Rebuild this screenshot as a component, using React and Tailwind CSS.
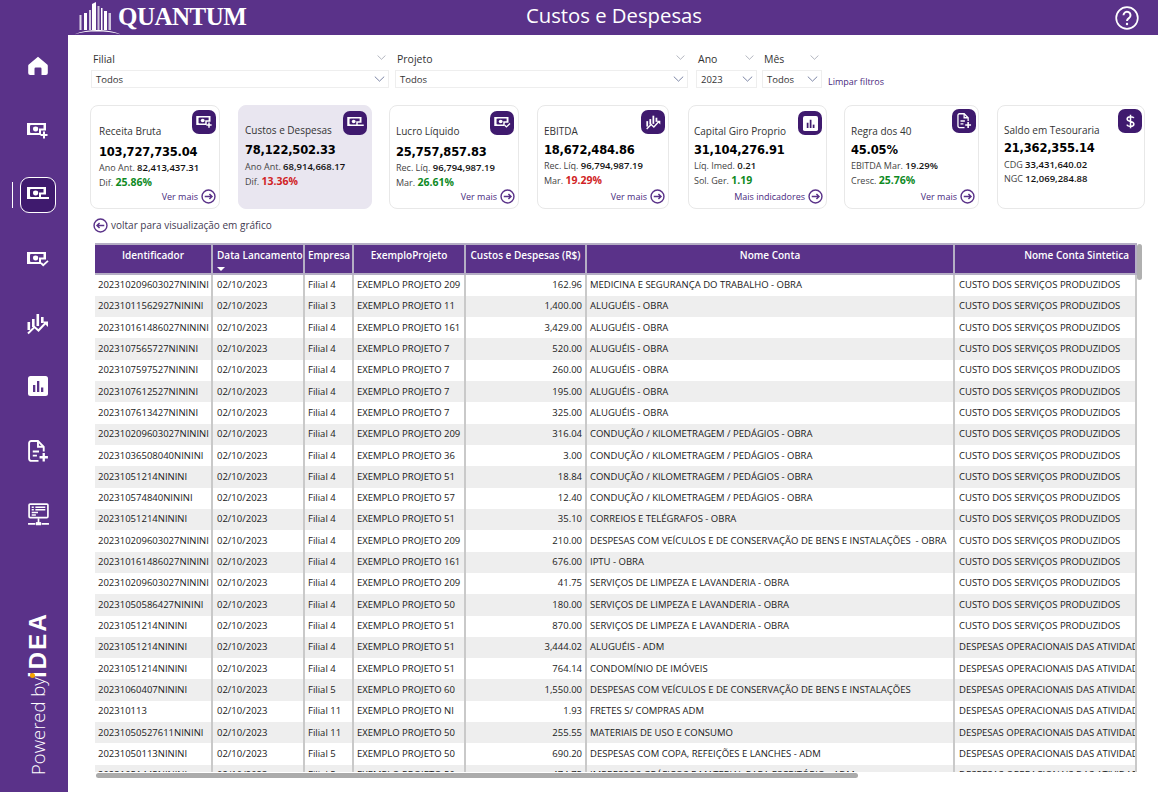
import React from "react";

const FONT = "[font-family:'Open_Sans','Noto_Sans',sans-serif]";

// icons
const Home = ({ className }) => (
  <svg viewBox="0 0 20 20" className={className} fill="currentColor">
    <path d="M10 .8 19.2 8.6c.4.4.6.8.6 1.3V17a2 2 0 0 1-2 2h-4.3v-6.2a1.2 1.2 0 0 0-1.2-1.2H7.7a1.2 1.2 0 0 0-1.2 1.2V19H2.2a2 2 0 0 1-2-2V9.900c0-.5.2-.9.6-1.300Z" />
  </svg>
);

const Money = ({ type, className, bg = "#5a3289" }) => (
  <svg viewBox="0 0 22 16" className={className} fill="none">
    <path fillRule="evenodd" fill="currentColor" d="M0 0h19v7.500h-5V12H0Z" />
    <path fill={bg} d="M3 2h13.500v3.500H12V10H3Z" />
    <path fill="currentColor" d="M2.500 1.500h3.500a4.500 4.500 0 0 0 0 9H2.500Z" />
    <ellipse cx="8.600" cy="6" rx="2.600" ry="2.400" fill="currentColor" />
    {type === "plus" && <path d="M17 8.500v7M13.500 12h7" stroke="currentColor" strokeWidth="2" />}
    {type === "minus" && <path d="M13 11h9" stroke="currentColor" strokeWidth="2" />}
    {type === "check" && <path d="m14 11 2.200 2.200L21 8.800" stroke="currentColor" strokeWidth="1.800" />}
  </svg>
);

const Trend = ({ className }) => (
  <svg viewBox="0 0 22 22" className={className} fill="currentColor">
    <rect x="5" y="6" width="2.600" height="8" />
    <rect x="9.500" y="1" width="2.600" height="12" />
    <rect x="14" y="4" width="2.600" height="6" />
    <rect x="0.500" y="9" width="2.600" height="8" />
    <path d="M1 20.500 7.500 14l4 3.500L18.500 10" fill="none" stroke="currentColor" strokeWidth="2" />
    <path d="M15.500 8.500H21V14Z" />
  </svg>
);

const Bars = ({ className, bg = "#5a3289" }) => (
  <svg viewBox="0 0 20 20" className={className}>
    <rect width="20" height="20" rx="2.500" fill="currentColor" />
    <rect x="5" y="9" width="2.300" height="7" fill={bg} />
    <rect x="9" y="5" width="2.300" height="11" fill={bg} />
    <rect x="13" y="11.500" width="2.300" height="4.500" fill={bg} />
  </svg>
);

const DocPlus = ({ className }) => (
  <svg viewBox="0 0 20 22" className={className} fill="none" stroke="currentColor" strokeWidth="1.800">
    <path d="M10 20H3a2 2 0 0 1-2-2V3a2 2 0 0 1 2-2h6.500L15 6.500V11" />
    <path d="M9.500 1v5.500H15" />
    <path d="M4.500 11h6M4.500 15h4" />
    <path d="M15 12.500v8M11 16.500h8" strokeWidth="2.200" />
  </svg>
);

const Monitor = ({ className }) => (
  <svg viewBox="0 0 20 22" className={className} fill="none" stroke="currentColor">
    <rect x="1" y="1" width="18" height="13" rx="1" strokeWidth="1.600" />
    <path d="M3.500 4h2M7 4h9.500M3.500 6.500h2M7 6.500h9.500M3.500 9h6M3.500 11.500h4" strokeWidth="1.400" />
    <path d="M10 14.500v5M0 20h7M13 20h7" strokeWidth="1.600" />
    <rect x="7.500" y="18.300" width="5" height="3" fill="currentColor" stroke="none" />
  </svg>
);

const Dollar = ({ className }) => (
  <svg viewBox="0 0 12 20" className={className} fill="none" stroke="currentColor" strokeWidth="2">
    <path d="M6 1v18M10.500 5.500C10 4 8 3.500 6 3.500 3.500 3.500 1.500 4.700 1.500 6.700 1.500 11 10.500 8.800 10.500 13.300c0 2-2 3.200-4.500 3.200-2.300 0-4.200-.7-4.700-2.300" />
  </svg>
);

const Chevron = ({ className }) => (
  <svg viewBox="0 0 12 7" className={className} fill="none" stroke="currentColor" strokeWidth="0.900">
    <path d="M.5.700 6 6 11.500.7" />
  </svg>
);

const CircleArrow = ({ left }) => (
  <svg viewBox="0 0 16 16" className="w-[15px] h-[15px] text-[#5a3289]" fill="none" stroke="currentColor">
    <circle cx="8" cy="8" r="6.900" strokeWidth="1.500" />
    {left ? (
      <path d="M12 8H4.500M7 5.300 4.300 8 7 10.700" strokeWidth="1.600" />
    ) : (
      <path d="M4 8h7.500M9 5.300 11.700 8 9 10.700" strokeWidth="1.600" />
    )}
  </svg>
);

const Logo = () => (
  <div className="flex items-end">
    <svg viewBox="0 0 48 34" className="w-[48px] h-[34px] text-white">
      <path d="M0 33.500C8 30 16 29 23 29s16 1 24 4.500c-8-2.500-16-3-24-3s-16 .5-23 3Z" fill="currentColor" />
      <g fill="currentColor">
        <rect x="10" y="12" width="3" height="17" />
        <rect x="15" y="9" width="2" height="20" opacity=".75" />
        <path d="M18 3 22 1v28h-4Z" />
        <rect x="23.500" y="5" width="2" height="24" opacity=".7" />
        <rect x="27" y="7" width="1.500" height="22" />
        <path d="M30 10h3v19h-3Z" />
        <rect x="34.500" y="12" width="2.500" height="17" opacity=".7" />
        <rect x="5.500" y="14" width="2" height="15" opacity=".8" />
      </g>
    </svg>
    <span className="-ml-[4px] mb-[6px] font-['Liberation_Serif',serif] font-bold text-[25px] leading-none tracking-[-0.5px] text-white">QUANTUM</span>
  </div>
);

const navItems = [
  { key: "home", mt: "mt-[21px]", el: <Home className="w-[20px] h-[20px]" /> },
  { key: "plus", mt: "mt-[47px]", el: <Money type="plus" className="w-[22px] h-[16px]" /> },
  { key: "check", mt: "mt-[39px]", el: <Money type="check" className="w-[22px] h-[16px]" /> },
  { key: "trend", mt: "mt-[45px]", el: <Trend className="w-[22px] h-[22px]" /> },
  { key: "bars", mt: "mt-[41px]", el: <Bars className="w-[20px] h-[20px]" /> },
  { key: "doc", mt: "mt-[44px]", el: <DocPlus className="w-[21px] h-[23px]" /> },
  { key: "mon", mt: "mt-[40px]", el: <Monitor className="w-[21px] h-[23px]" /> },
];

const Sidebar = () => (
  <aside className="w-[68px] h-full shrink-0 bg-[#5a3289] pl-[8px] flex flex-col items-center text-white relative">
    <div className="h-[35px] shrink-0" />
    <div className={`flex justify-center ${navItems[0].mt}`}>{navItems[0].el}</div>
    <div className={`flex justify-center ${navItems[1].mt}`}>{navItems[1].el}</div>
    <div className="mt-[38px] relative">
      <div className="absolute -left-[8px] top-[5px] w-[1px] h-[26px] bg-white" />
      <div className="w-[36px] h-[36px] rounded-[9px] border border-white bg-[#3f1a6e] flex items-center justify-center">
        <Money type="minus" className="w-[22px] h-[16px]" bg="#3f1a6e" />
      </div>
    </div>
    {navItems.slice(2).map((n) => (
      <div key={n.key} className={`flex justify-center ${n.mt}`}>{n.el}</div>
    ))}
    <div className="mt-auto mb-[17px] flex items-center rotate-180 [writing-mode:vertical-rl]">
      <span className="text-[18.500px] leading-[22px] text-white font-['Open_Sans',sans-serif] font-light">Powered by</span>
      <span className="relative -mt-[1px] text-[24px] leading-[22px] font-['Liberation_Sans',sans-serif] font-bold tracking-[2.200px]">
        iDEA
        <span className="absolute right-[3px] top-[0px] w-[5px] h-[5px] rounded-full bg-[#f5a400]" />
      </span>
    </div>
  </aside>
);

const Filter = ({ label, value, className, gap = "pr-[2px]" }) => (
  <div className={`flex flex-col shrink-0 ${className}`}>
    <div className={`h-[20px] flex items-center justify-between pl-[2px] ${gap} text-[10.500px] text-[#333]`}>
      <span>{label}</span>
      <Chevron className="w-[9px] h-[5px] text-[#8a8f9c] mt-[-6px] mr-[1px]" />
    </div>
    <div className="h-[18px] border border-[#eeeeee] flex items-center justify-between pl-[4px] pr-[3px] text-[9.500px] text-[#333]">
      <span className="pt-[2px]">{value}</span>
      <Chevron className="w-[11px] h-[6px] text-[#55608a]" />
    </div>
  </div>
);

const Filters = () => (
  <div className="flex pl-[23px] pt-[15px] h-[70px]">
    <Filter label="Filial" value="Todos" className="w-[298px]" />
    <Filter label="Projeto" value="Todos" className="w-[293px] ml-[6px]" />
    <Filter label="Ano" value="2023" className="w-[61px] ml-[8px]" />
    <Filter label="Mês" value="Todos" className="w-[60px] ml-[5px]" />
    <span className="ml-[6px] mt-[26px] text-[9px] leading-[12px] text-[#4a2a80]">Limpar filtros</span>
  </div>
);

const Sub = ({ label, value, color }) => (
  <div className="text-[9px] leading-[14px] h-[14px] whitespace-nowrap text-[#444]">
    {label}{" "}
    {color ? (
      <span className={`font-bold text-[10.500px] ${color}`}>{value}</span>
    ) : (
      <span className="font-semibold text-[9.500px] text-[#111]">{value}</span>
    )}
  </div>
);

const GREEN = "text-[#0f8a1f]";
const RED = "text-[#d11f26]";

const cards = [
  { title: "Receita Bruta", value: "103,727,735.04", rows: [["Ano Ant.", "82,413,437.31"], ["Dif.", "25.86%", GREEN]], more: "Ver mais", icon: <Money type="plus" className="w-[17px] h-[12px]" bg="#3f1a6e" />, box: "w-[130px] ml-[22px] pl-[8px] pt-[18px]", vm: "mt-[6px]", rm: "mt-[1px]", tile: "right-[3px] top-[4px]" },
  { title: "Custos e Despesas", value: "78,122,502.33", rows: [["Ano Ant.", "68,914,668.17"], ["Dif.", "13.36%", RED]], icon: <Money type="minus" className="w-[17px] h-[12px]" bg="#3f1a6e" />, box: "w-[134px] ml-[18px] pl-[6px] pt-[17px] bg-[#e9e6f0] border-[#e9e6f0]", vm: "mt-[5px]", rm: "mt-[2px]", tile: "right-[4px] top-[5px]" },
  { title: "Lucro Líquido", value: "25,757,857.83", rows: [["Rec. Líq.", "96,794,987.19"], ["Mar.", "26.61%", GREEN]], more: "Ver mais", icon: <Money type="check" className="w-[17px] h-[12px]" bg="#3f1a6e" />, box: "w-[130px] ml-[17px] pl-[6px] pt-[18px]", vm: "mt-[6px]", rm: "mt-[1px]", tile: "right-[4px] top-[5px]" },
  { title: "EBITDA", value: "18,672,484.86", rows: [["Rec. Líq.", "96,794,987.19"], ["Mar.", "19.29%", RED]], more: "Ver mais", icon: <Trend className="w-[15px] h-[15px]" />, box: "w-[132px] ml-[18px] pl-[6px] pt-[18px]", vm: "mt-[4px]", rm: "mt-[1px]", tile: "right-[3px] top-[4px]" },
  { title: "Capital Giro Proprio", value: "31,104,276.91", rows: [["Líq. Imed.", "0.21"], ["Sol. Ger.", "1.19", GREEN]], more: "Mais indicadores", icon: <Bars className="w-[15px] h-[15px]" bg="#3f1a6e" />, box: "w-[139px] ml-[19px] pl-[5px] pt-[18px]", vm: "mt-[4px]", rm: "mt-[1px]", tile: "right-[4px] top-[5px]" },
  { title: "Regra dos 40", value: "45.05%", rows: [["EBITDA Mar.", "19.29%"], ["Cresc.", "25.76%", GREEN]], more: "Ver mais", icon: <DocPlus className="w-[15px] h-[16px]" />, box: "w-[135px] ml-[17px] pl-[6px] pt-[18px]", vm: "mt-[4px]", rm: "mt-[1px]", tile: "right-[2px] top-[3px]" },
  { title: "Saldo em Tesouraria", value: "21,362,355.14", rows: [["CDG", "33,431,640.02"], ["NGC", "12,069,284.88"]], icon: <Dollar className="w-[9px] h-[15px]" />, box: "w-[148px] ml-[18px] pl-[6px] pt-[17px]", vm: "mt-[3px]", rm: "mt-[2px]", tile: "right-[2px] top-[3px]" },
];

const Card = ({ c }) => (
  <div className={`relative shrink-0 h-[104px] rounded-[8px] border border-[#e8e8e8] ${c.box}`}>
    <div className={`absolute w-[24px] h-[24px] rounded-[7px] bg-[#3f1a6e] text-white flex items-center justify-center ${c.tile}`}>
      {c.icon}
    </div>
    <div className="text-[10px] leading-[14px] text-[#333]">{c.title}</div>
    <div className={`font-['DejaVu_Sans',sans-serif] font-bold text-[11.500px] leading-[16px] text-black tracking-[-0.2px] ${c.vm}`}>{c.value}</div>
    <div className={c.rm}>
      {c.rows.map((r) => (
        <Sub key={r[0]} label={r[0]} value={r[1]} color={r[2]} />
      ))}
    </div>
    {c.more && (
      <div className="absolute right-[3px] bottom-[4px] flex items-center gap-[3px] text-[9px] text-[#4a2a80]">
        {c.more}
        <CircleArrow />
      </div>
    )}
  </div>
);

const SYN = "CUSTO DOS SERVIÇOS PRODUZIDOS";
const OPER = "DESPESAS OPERACIONAIS DAS ATIVIDADES";
const ALU = "ALUGUÉIS - OBRA";
const KM = "CONDUÇÃO / KILOMETRAGEM / PEDÁGIOS - OBRA";
const LIMP = "SERVIÇOS DE LIMPEZA E LAVANDERIA - OBRA";

const rows = [
  ["202310209603027NININI", "Filial 4", "EXEMPLO PROJETO 209", "162.96", "MEDICINA E SEGURANÇA DO TRABALHO - OBRA", SYN],
  ["20231011562927NININI", "Filial 3", "EXEMPLO PROJETO 11", "1,400.00", ALU, SYN],
  ["202310161486027NININI", "Filial 4", "EXEMPLO PROJETO 161", "3,429.00", ALU, SYN],
  ["2023107565727NININI", "Filial 4", "EXEMPLO PROJETO 7", "520.00", ALU, SYN],
  ["2023107597527NININI", "Filial 4", "EXEMPLO PROJETO 7", "260.00", ALU, SYN],
  ["2023107612527NININI", "Filial 4", "EXEMPLO PROJETO 7", "195.00", ALU, SYN],
  ["2023107613427NININI", "Filial 4", "EXEMPLO PROJETO 7", "325.00", ALU, SYN],
  ["202310209603027NININI", "Filial 4", "EXEMPLO PROJETO 209", "316.04", KM, SYN],
  ["20231036508040NININI", "Filial 4", "EXEMPLO PROJETO 36", "3.00", KM, SYN],
  ["20231051214NININI", "Filial 4", "EXEMPLO PROJETO 51", "18.84", KM, SYN],
  ["202310574840NININI", "Filial 4", "EXEMPLO PROJETO 57", "12.40", KM, SYN],
  ["20231051214NININI", "Filial 4", "EXEMPLO PROJETO 51", "35.10", "CORREIOS E TELÉGRAFOS - OBRA", SYN],
  ["202310209603027NININI", "Filial 4", "EXEMPLO PROJETO 209", "210.00", "DESPESAS COM VEÍCULOS E DE CONSERVAÇÃO DE BENS E INSTALAÇÕES  - OBRA", SYN],
  ["202310161486027NININI", "Filial 4", "EXEMPLO PROJETO 161", "676.00", "IPTU - OBRA", SYN],
  ["202310209603027NININI", "Filial 4", "EXEMPLO PROJETO 209", "41.75", LIMP, SYN],
  ["20231050586427NININI", "Filial 4", "EXEMPLO PROJETO 50", "180.00", LIMP, SYN],
  ["20231051214NININI", "Filial 4", "EXEMPLO PROJETO 51", "870.00", LIMP, SYN],
  ["20231051214NININI", "Filial 4", "EXEMPLO PROJETO 51", "3,444.02", "ALUGUÉIS - ADM", OPER],
  ["20231051214NININI", "Filial 4", "EXEMPLO PROJETO 51", "764.14", "CONDOMÍNIO DE IMÓVEIS", OPER],
  ["20231060407NININI", "Filial 5", "EXEMPLO PROJETO 60", "1,550.00", "DESPESAS COM VEÍCULOS E DE CONSERVAÇÃO DE BENS E INSTALAÇÕES", OPER],
  ["202310113", "Filial 11", "EXEMPLO PROJETO NI", "1.93", "FRETES S/ COMPRAS ADM", OPER],
  ["20231050527611NININI", "Filial 11", "EXEMPLO PROJETO 50", "255.55", "MATERIAIS DE USO E CONSUMO", OPER],
  ["20231050113NININI", "Filial 5", "EXEMPLO PROJETO 50", "690.20", "DESPESAS COM COPA, REFEIÇÕES E LANCHES - ADM", OPER],
  ["20231051445NININI", "Filial 5", "EXEMPLO PROJETO 50", "474.75", "IMPRESSOS GRÁFICOS E MATERIAL PARA ESCRITÓRIO - ADM", OPER],
];

const COLS = "grid grid-cols-[118px_92px_49px_112px_121px_368px_182px]";
const headCell = "border-r-2 border-[#b5aec4] h-full pt-[1px] text-[10px] leading-[18px] font-semibold text-white whitespace-nowrap overflow-hidden";
const cell = "border-r-2 border-[#c9c9c9] h-full pl-[3px] whitespace-nowrap overflow-hidden flex items-center";

const Table = () => (
  <div className="relative w-[1049px] ml-[27px] mt-[5px] h-[536px]">
    <div className="h-[529px] overflow-hidden">
      <div className={`${COLS} h-[31.500px] w-[1042px] bg-[#5a3289] border-y-2 border-[#b5aec4]`}>
        <div className={`${headCell} text-center`}>Identificador</div>
        <div className={`${headCell} pl-[4px] relative`}>
          Data Lancamento
          <span className="absolute left-[4px] bottom-[2px] w-0 h-0 border-x-[4px] border-x-transparent border-t-[4px] border-t-white" />
        </div>
        <div className={`${headCell} pl-[3px]`}>Empresa</div>
        <div className={`${headCell} text-center`}>ExemploProjeto</div>
        <div className={`${headCell} text-center`}>Custos e Despesas (R$)</div>
        <div className={`${headCell} text-center`}>Nome Conta</div>
        <div className={`${headCell} text-right pr-[6px] border-r-0`}>Nome Conta Sintetica</div>
      </div>
      {rows.map((r, i) => (
        <div key={i} className={`${COLS} h-[21.320px] w-[1042px] text-[9.500px] text-[#1a1a1a] ${i % 2 ? "bg-[#eeeeee]" : "bg-white"}`}>
          <div className={cell}>{r[0]}</div>
          <div className={`${cell} pl-[4px]`}>02/10/2023</div>
          <div className={cell}>{r[1]}</div>
          <div className={cell}>{r[2]}</div>
          <div className={`${cell} justify-end pr-[3px]`}>{r[3]}</div>
          <div className={`${cell} whitespace-pre`}>{r[4]}</div>
          <div className={`${cell} pl-[4px] border-r-0`}>{r[5]}</div>
        </div>
      ))}
    </div>
    <div className="absolute right-[2px] top-[1px] w-[5px] h-[36px] rounded-full bg-[#b0b0b0]" />
    <div className="absolute left-[1px] bottom-[1px] w-[762px] h-[5px] rounded-full bg-[#ababab]" />
  </div>
);

const App = () => (
  <div className={`w-[1158px] h-[792px] flex overflow-hidden bg-white ${FONT}`}>
    <Sidebar />
    <main className="flex-1 min-w-0 flex flex-col">
      <header className="h-[35px] shrink-0 bg-[#5a3289] flex items-center justify-between pl-[6px] pr-[19px] relative">
        <Logo />
        <h1 className="absolute left-[2px] right-0 top-0 text-center text-[20.300px] leading-[31px] text-white">Custos e Despesas</h1>
        <svg viewBox="0 0 24 24" className="w-[24px] h-[24px] text-white" fill="none" stroke="currentColor" strokeWidth="1.700">
          <circle cx="12" cy="12" r="10.800" />
          <path d="M8.500 9.300a3.500 3.500 0 1 1 5.400 2.900c-1.200.8-1.900 1.400-1.900 2.800" strokeWidth="2" />
          <circle cx="12" cy="18" r="1.200" fill="currentColor" stroke="none" />
        </svg>
      </header>
      <Filters />
      <div className="flex">
        {cards.map((c) => (
          <Card key={c.title} c={c} />
        ))}
      </div>
      <div className="h-[25px] mt-[4px] flex items-center gap-[3px] pl-[25px] text-[10px] text-[#3f3a52]">
        <CircleArrow left />
        voltar para visualização em gráfico
      </div>
      <Table />
    </main>
  </div>
);

export default App;
